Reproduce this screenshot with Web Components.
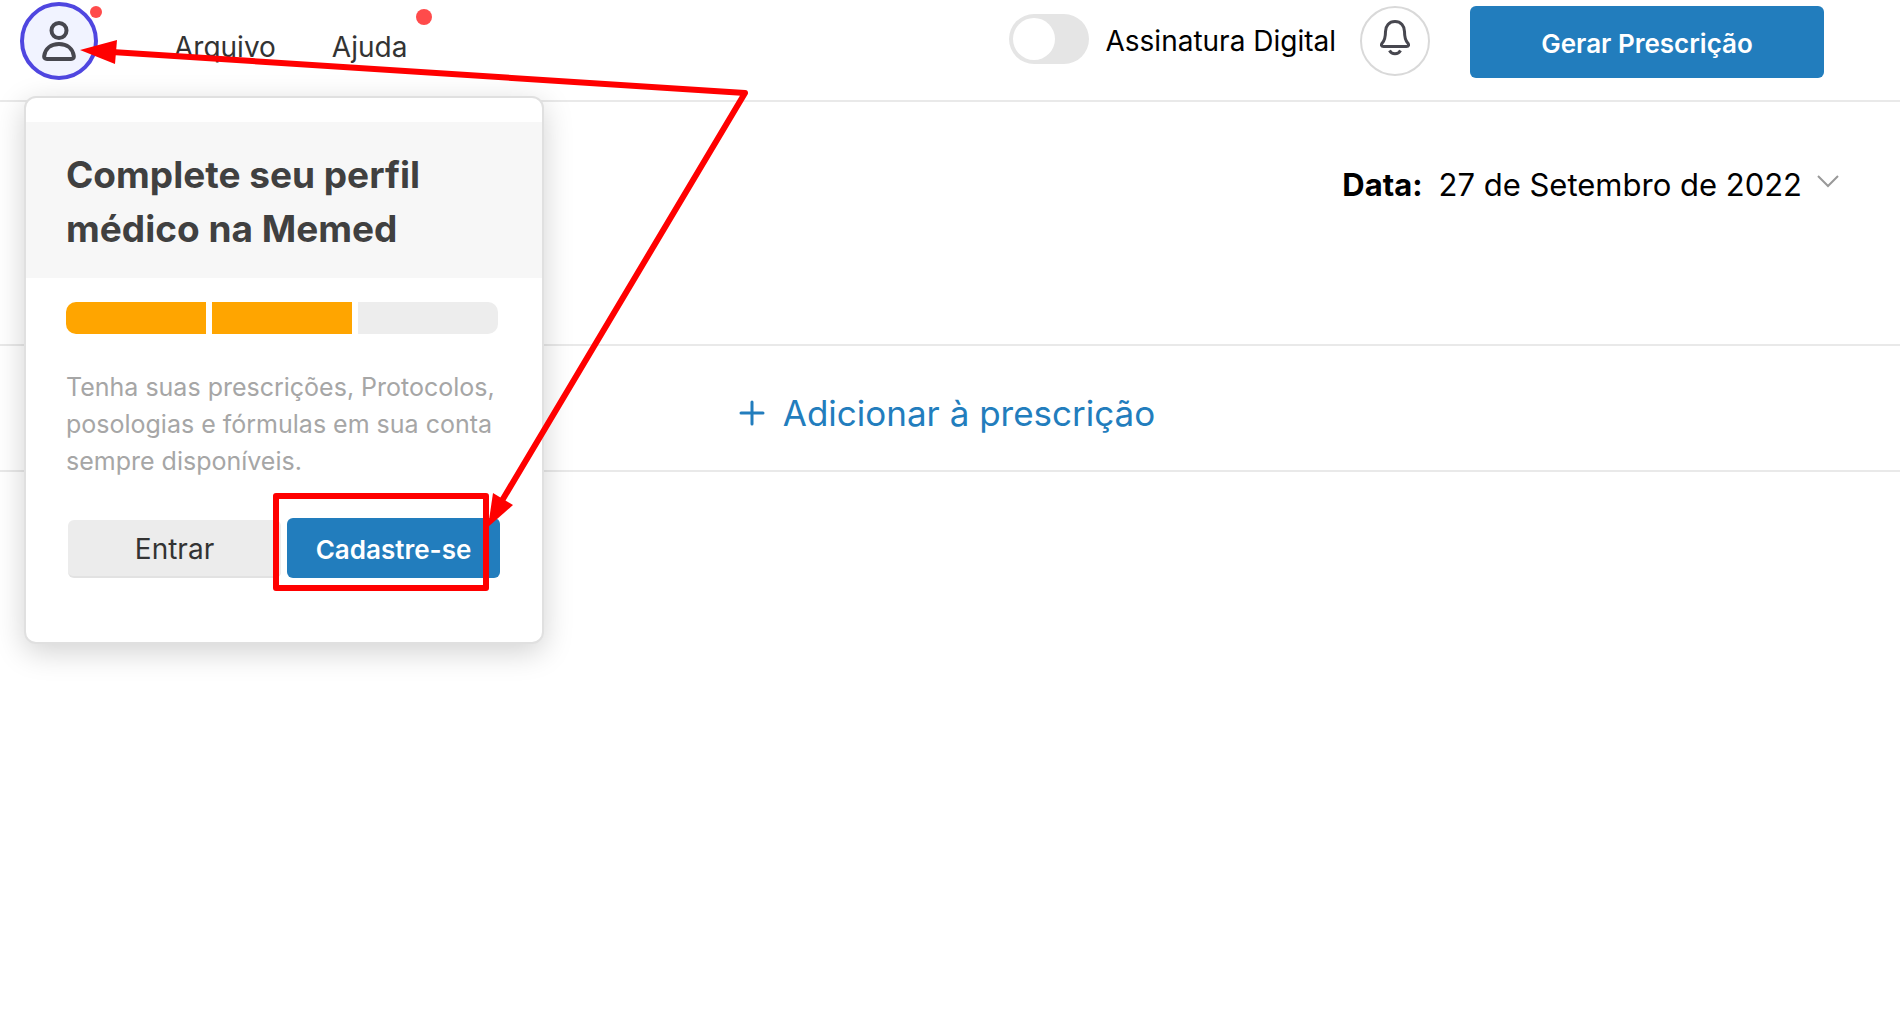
<!DOCTYPE html>
<html lang="pt-BR">
<head>
<meta charset="utf-8">
<meta name="viewport" content="width=device-width, initial-scale=1">
<title>Prescrição</title>
<style>
    body {
        margin: 0;
        background: #fff;
        color: #000;
        font-family: Inter, "Liberation Sans", sans-serif;
        font-size: 28px;
        --blue: #227dbd;
        --line: #e9e9e9;
        --alert: #ff4b4b;
        --mark: #ff0000;
    }
</style>
</head>
<body>

<memed-app></memed-app>

<script>
(function(){

// shared helper, every element clones its own template
function define(name, html) {
    var template = document.createElement('template');
    template.innerHTML = html;

    window.customElements.define(name, class extends HTMLElement {
        constructor() {
            super();
            this.attachShadow({mode:'open'})
            this.shadowRoot.appendChild(template.content.cloneNode(true));
        }
    });
}

define('user-avatar', /*html*/`
<style>
    :host {
        display: block;
        position: relative;
    }

    button {
        display: flex;
        align-items: center;
        justify-content: center;
        box-sizing: border-box;
        width: 78px;
        height: 78px;
        padding: 0;
        border: 4px solid #4f46e0;
        border-radius: 50%;
        background: #f1f3ff;
    }

    .badge {
        position: absolute;
        top: 4px;
        right: -4px;
        width: 12px;
        height: 12px;
        border-radius: 50%;
        background: var(--alert);
    }
</style>

<button type="button" aria-label="Perfil">
    <svg width="34" height="40" viewBox="0 0 34 40" fill="none" stroke="#47474f" stroke-width="4">
        <circle cx="17" cy="9.5" r="7.5"/>
        <path d="M5 38h24c2 0 3-1.200 2.800-3C30.800 27.500 25 23 17 23S3.200 27.500 2.200 35C2 36.800 3 38 5 38z" stroke-linejoin="round"/>
    </svg>
</button>
<span class="badge"></span>
`);

define('menu-link', /*html*/`
<style>
    :host {
        display: block;
        position: relative;
    }

    a {
        color: #333;
        line-height: 32px;
        text-decoration: none;
    }

    .badge {
        display: none;
        position: absolute;
        top: -21px;
        right: -25px;
        width: 16px;
        height: 16px;
        border-radius: 50%;
        background: var(--alert);
    }

    :host([new]) .badge {
        display: block;
    }
</style>

<a href="#"><slot></slot></a><span class="badge"></span>
`);

define('toggle-switch', /*html*/`
<style>
    :host {
        display: flex;
        align-items: center;
        gap: 16px;
    }

    input {
        display: flex;
        appearance: none;
        box-sizing: border-box;
        flex: none;
        width: 80px;
        height: 50px;
        margin: 0 0 4px;
        padding: 4px;
        border-radius: 25px;
        background: #e5e5e5;
    }

    input::before {
        content: "";
        width: 42px;
        height: 42px;
        border-radius: 50%;
        background: #fff;
    }

    input:checked {
        justify-content: flex-end;
        background: var(--blue);
    }

    label {
        line-height: 32px;
        white-space: nowrap;
    }
</style>

<input type="checkbox" role="switch" id="toggle"><label for="toggle"><slot></slot></label>
`);

define('bell-button', /*html*/`
<style>
    :host {
        display: block;
    }

    button {
        display: flex;
        justify-content: center;
        box-sizing: border-box;
        width: 70px;
        height: 70px;
        padding: 12px 0 0;
        border: 2px solid #d9d9d9;
        border-radius: 50%;
        background: #fff;
    }
</style>

<button type="button" aria-label="Notificações">
    <svg width="30" height="36" viewBox="0 0 30 36" fill="none" stroke="#47474f" stroke-width="3" stroke-linejoin="round">
        <path d="M15 1.500C9 1.500 5.500 6 5.500 11.500c0 6-.500 8.500-3.200 11.500-1.600 2-.900 3.500 1.200 3.500h23c2.100 0 2.800-1.500 1.200-3.500-2.700-3-3.200-5.500-3.200-11.500C24.500 6 21 1.500 15 1.500z"/>
        <path d="M9.500 30.500c1.200 2.200 3 3.300 5.500 3.300s4.300-1.100 5.500-3.300"/>
    </svg>
</button>
`);

define('primary-button', /*html*/`
<style>
    :host {
        display: block;
    }

    button {
        width: 100%;
        height: 100%;
        padding: 2px 0 0;
        border: 0;
        border-radius: 6px;
        background: var(--blue);
        color: #fff;
        font: inherit;
        font-size: 26px;
        font-weight: 600;
    }

    :host([plain]) button {
        border-bottom: 2px solid #e2e2e2;
        background: #ececec;
        color: #333;
        font-size: 28px;
        font-weight: 400;
    }
</style>

<button type="button"><slot></slot></button>
`);

define('top-bar', /*html*/`
<style>
    :host {
        display: flex;
        align-items: center;
        justify-content: space-between;
        padding: 2px 76px 20px 20px;
        border-bottom: 2px solid var(--line);
    }

    .side {
        display: flex;
        align-items: center;
    }

    nav {
        display: flex;
        gap: 56px;
        padding: 12px 0 0 76px;
    }

    bell-button {
        margin: 0 40px 0 24px;
    }

    primary-button {
        width: 354px;
        height: 72px;
        padding-top: 2px;
    }
</style>

<div class="side">
    <user-avatar></user-avatar>
    <nav>
        <menu-link>Arquivo</menu-link>
        <menu-link new>Ajuda</menu-link>
    </nav>
</div>
<div class="side">
    <toggle-switch>Assinatura Digital</toggle-switch>
    <bell-button></bell-button>
    <primary-button>Gerar Prescrição</primary-button>
</div>
`);

define('date-row', /*html*/`
<style>
    :host {
        display: flex;
        align-items: center;
        justify-content: flex-end;
        gap: 16px;
        padding: 62px 60px 138px;
        border-bottom: 2px solid var(--line);
        font-size: 31px;
        line-height: 42px;
    }

    label {
        font-weight: 700;
    }

    .field {
        display: flex;
        align-items: center;
        gap: 14px;
    }

    select {
        appearance: none;
        field-sizing: content;
        padding: 0;
        border: 0;
        background: none;
        color: inherit;
        font: inherit;
    }

    svg {
        margin-bottom: 8px;
    }
</style>

<label for="date">Data:</label>
<div class="field">
    <select id="date">
        <option>27 de Setembro de 2022</option>
    </select>
    <svg width="24" height="14" viewBox="0 0 24 14" fill="none" stroke="#999" stroke-width="2">
        <path d="M2 2l10 10L22 2"/>
    </svg>
</div>
`);

define('add-row', /*html*/`
<style>
    :host {
        display: flex;
        justify-content: center;
        padding: 47px 6px 37px 0;
        border-bottom: 2px solid var(--line);
    }

    button {
        display: flex;
        align-items: center;
        gap: 18px;
        padding: 0;
        border: 0;
        background: none;
        color: var(--blue);
        font: inherit;
        font-size: 35px;
        line-height: 40px;
    }
</style>

<button type="button">
    <svg width="26" height="26" viewBox="0 0 26 26" stroke="currentColor" stroke-width="3" stroke-linecap="round">
        <path d="M2 13h22M13 2v22"/>
    </svg>
    <slot></slot>
</button>
`);

define('profile-card', /*html*/`
<style>
    :host {
        display: block;
        box-sizing: border-box;
        width: 520px;
        padding: 24px 0 64px;
        border: 2px solid #e0e0e0;
        border-radius: 12px;
        background: #fff;
        box-shadow: 0 8px 30px rgba(0, 0, 0, .18);
    }

    h2 {
        margin: 0;
        padding: 26px 40px 22px;
        background: #f7f7f7;
        color: #404040;
        font-size: 37px;
        font-weight: 700;
        line-height: 54px;
    }

    .progress {
        display: grid;
        grid-template-columns: repeat(3, 1fr);
        gap: 6px;
        height: 32px;
        margin: 24px 44px 0 40px;
        border-radius: 10px;
        overflow: hidden;
    }

    .progress span {
        background: #ededed;
    }

    .progress .done {
        background: #ffa500;
    }

    p {
        margin: 35px 0 0;
        padding: 0 40px;
        color: #a6a6a6;
        font-size: 25px;
        line-height: 37px;
        white-space: nowrap;
    }

    .actions {
        display: flex;
        align-items: flex-end;
        gap: 6px;
        margin: 38px 42px 0;
    }

    .actions primary-button {
        flex: 1;
        height: 60px;
    }

    .actions primary-button[plain] {
        height: 58px;
    }
</style>

<h2>Complete seu perfil<br>médico na Memed</h2>
<div class="progress" role="progressbar" aria-valuemin="0" aria-valuemax="3" aria-valuenow="2">
    <span class="done"></span><span class="done"></span><span></span>
</div>
<p>Tenha suas prescrições, Protocolos,<br>posologias e fórmulas em sua conta<br>sempre disponíveis.</p>
<div class="actions">
    <primary-button plain>Entrar</primary-button>
    <primary-button>Cadastre-se</primary-button>
</div>
`);

// red arrows and the frame, drawn over everything
define('guide-marks', /*html*/`
<style>
    :host {
        display: block;
        pointer-events: none;
    }

    svg {
        display: block;
    }
</style>

<svg width="760" height="600" viewBox="0 0 760 600" fill="none" stroke="var(--mark)" stroke-width="6" stroke-linejoin="round">
    <path d="M112 52L745 93L500 504"/>
    <rect x="276" y="496" width="210" height="92"/>
    <g fill="var(--mark)" stroke="none">
        <path d="M80 50l37-10-2 24z"/>
        <path d="M488 527l5-34 20 12z"/>
    </g>
</svg>
`);

define('memed-app', /*html*/`
<style>
    :host {
        display: block;
        position: relative;
        min-height: 100vh;
    }

    profile-card {
        position: absolute;
        top: 96px;
        left: 24px;
    }

    guide-marks {
        position: absolute;
        top: 0;
        left: 0;
    }
</style>

<top-bar></top-bar>
<main>
    <date-row></date-row>
    <add-row>Adicionar à prescrição</add-row>
</main>
<profile-card></profile-card>
<guide-marks></guide-marks>
`);

})();
</script>
</body>
</html>
